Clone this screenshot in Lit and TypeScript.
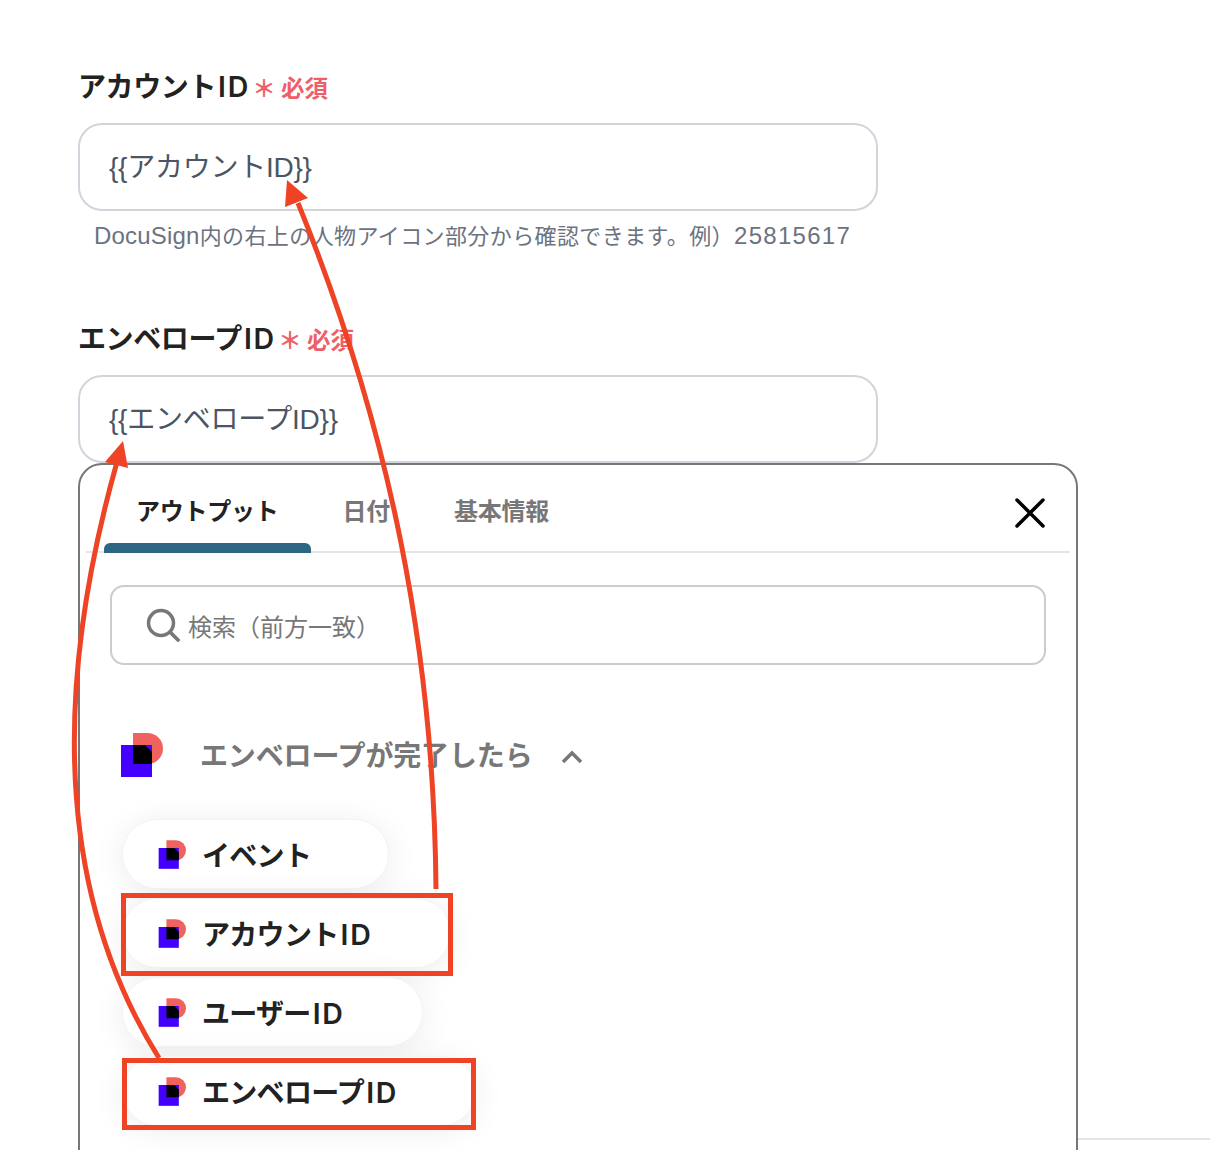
import { LitElement, html, css, svg } from "lit";
import { customElement } from "lit/decorators.js";

const logo = (cls: string) => html`<svg class=${cls} viewBox="0 0 43 44" aria-hidden="true">
  <path fill="#f0625e" d="M13 0H27.5A15.5 15.5 0 0 1 27.5 31H13Z"/>
  <rect fill="#4300ff" x="1" y="12" width="31" height="32"/>
  <path fill="#000" d="M13 12H25L32 19V31H13Z"/>
</svg>`;

const pills = [
  ["イベント", ""],
  ["アカウント", "ID"],
  ["ユーザー", "ID"],
  ["エンベロープ", "ID"],
];

@customElement("app-root")
export class AppRoot extends LitElement {
  static styles = css`
    :host {
      display: block;
      position: relative;
      height: 1150px;
      overflow: hidden;
      background: #fff;
      font-family: "Liberation Sans", "Noto Sans CJK JP", sans-serif;
      color: #222;
    }
    .page { padding: 64px 0 0 78px; display: flex; flex-direction: column; }
    .lat { font-family: Inter, "Liberation Sans", sans-serif; font-weight: 600; font-size: 28.5px; letter-spacing: 1.8px; margin-left: 2px; }
    .label {
      display: flex; align-items: center; height: 46px; margin-bottom: 13px; padding-bottom: 4px; box-sizing: border-box;
      font-size: 28px; font-weight: 700; color: #222; letter-spacing: -0.4px;
    }
    .req { display: flex; align-items: center; margin-left: 0; margin-top: 3px; font-size: 23.5px; color: #ee5f6a; font-weight: 700; letter-spacing: 0; }
    .star { width: 28px; margin-right: 3px; text-align: center; }
    .input {
      box-sizing: border-box; width: 800px; height: 88px; border: 2px solid #d1d5db; border-radius: 24px;
      display: flex; align-items: center; padding: 0 0 4px 29px; font-size: 28px; color: #4b5563; letter-spacing: -0.25px;
    }
    .hint { margin: 7px 0 0 16px; height: 36px; line-height: 36px; font-size: 24px; color: #6b7280; letter-spacing: 0.2px; }
    .hint .ja { font-size: 22px; letter-spacing: 0.4px; }
    .hint .num { letter-spacing: 1.3px; }
    .field2 { margin-top: 62px; }
    .lower { display: flex; }
    .panel {
      box-sizing: border-box; width: 1000px; height: 760px; flex: none;
      border: 2px solid #777; border-radius: 24px 24px 0 0; padding: 0 6px; background: #fff;
    }
    .tabbar { display: flex; align-items: stretch; height: 86px; border-bottom: 2px solid #e5e5e5; padding-left: 18px; position: relative; }
    .tab { position: relative; padding: 25px 32px 0; font-size: 24px; font-weight: 700; color: #777; line-height: 44px; letter-spacing: -0.25px; }
    .tab.active { color: #222; }
    .tab.active::after { content: ""; position: absolute; left: 0; right: 0; bottom: -2px; height: 10px; background: #2e6683; border-radius: 6px 6px 0 0; }
    .close { margin-left: auto; margin-right: 24px; margin-top: 32px; width: 32px; height: 32px; }
    .search {
      box-sizing: border-box; margin: 32px 24px 0 24px; height: 80px; border: 2px solid #ccc; border-radius: 14px;
      display: flex; align-items: center; padding-left: 34px; gap: 8px; font-size: 24px; color: #777;
    }
    .search svg { width: 34px; height: 34px; flex: none; }
    .section { display: flex; align-items: center; margin: 67px 0 0 34px; height: 46px; font-size: 28px; font-weight: 700; color: #777; letter-spacing: -0.15px; }
    .section .big { width: 43px; height: 44px; margin-right: 37px; flex: none; }
    .section .title { padding-bottom: 2px; }
    .section .chev { width: 24px; height: 14px; margin: 4px 0 0 27px; flex: none; }
    .pills { display: flex; flex-direction: column; align-items: flex-start; gap: 9px; margin: 41px 0 0 36px; }
    .pill {
      box-sizing: border-box; height: 70px; border-radius: 35px; background: #fff; display: flex; align-items: center;
      padding: 0 77px 0 35px; gap: 16px; font-size: 28px; font-weight: 700; color: #222; letter-spacing: -0.7px;
      box-shadow: 0 4px 32px rgba(0,0,0,.08); border: 1px solid #f4f4f4;
    }
    .pill svg { width: 28px; height: 29px; flex: none; }
    .rest { flex: 1; height: 2px; margin-top: 675px; background: #e5e5e5; }
    .overlay { position: absolute; left: 0; top: 0; width: 1210px; height: 1150px; pointer-events: none; }
  `;

  render() {
    return html`
      <div class="page">
        <div class="label"><span>アカウント<span class="lat">ID</span></span><span class="req"><span class="star">＊</span>必須</span></div>
        <div class="input">{{アカウントID}}</div>
        <div class="hint">DocuSign<span class="ja">内の右上の人物アイコン部分から確認できます。例）</span><span class="num">25815617</span></div>
        <div class="label field2"><span>エンベロープ<span class="lat">ID</span></span><span class="req"><span class="star">＊</span>必須</span></div>
        <div class="input">{{エンベロープID}}</div>
        <div class="lower">
          <div class="panel">
            <div class="tabbar">
              <div class="tab active">アウトプット</div>
              <div class="tab">日付</div>
              <div class="tab">基本情報</div>
              <svg class="close" viewBox="0 0 32 32"><path d="M3 3L29 29M29 3L3 29" stroke="#000" stroke-width="3.5" stroke-linecap="round"/></svg>
            </div>
            <div class="search">
              <svg viewBox="0 0 34 34"><circle cx="15" cy="15" r="12.5" fill="none" stroke="#777" stroke-width="3.5"/><path d="M24 24L32 32" stroke="#777" stroke-width="3.8" stroke-linecap="round"/></svg>
              <span>検索（前方一致）</span>
            </div>
            <div class="section">
              ${logo("big")}
              <span class="title">エンベロープが完了したら</span>
              <svg class="chev" viewBox="0 0 24 14"><path d="M3 12L12 3L21 12" fill="none" stroke="#777" stroke-width="3.5"/></svg>
            </div>
            <div class="pills">
              ${pills.map(([ja, lat]) => html`<div class="pill">${logo("")}<span>${ja}${lat ? html`<span class="lat">${lat}</span>` : ""}</span></div>`)}
            </div>
          </div>
          <div class="rest"></div>
        </div>
      </div>
      <svg class="overlay" viewBox="0 0 1210 1150">
        ${svg`
          <g fill="none" stroke="#ee4325">
            <rect x="123.5" y="895.5" width="327" height="78" stroke-width="5"/>
            <rect x="124.5" y="1060.5" width="349" height="67" stroke-width="5"/>
            <path d="M436 889C434 650 390 430 298 203" stroke-width="5"/>
            <path d="M159 1058C60 900 50 700 117 462" stroke-width="5"/>
          </g>
          <path fill="#ee4325" d="M287 180L308 198L285 207Z"/>
          <path fill="#ee4325" d="M123 441L105 462L128 468Z"/>
        `}
      </svg>
    `;
  }
}
